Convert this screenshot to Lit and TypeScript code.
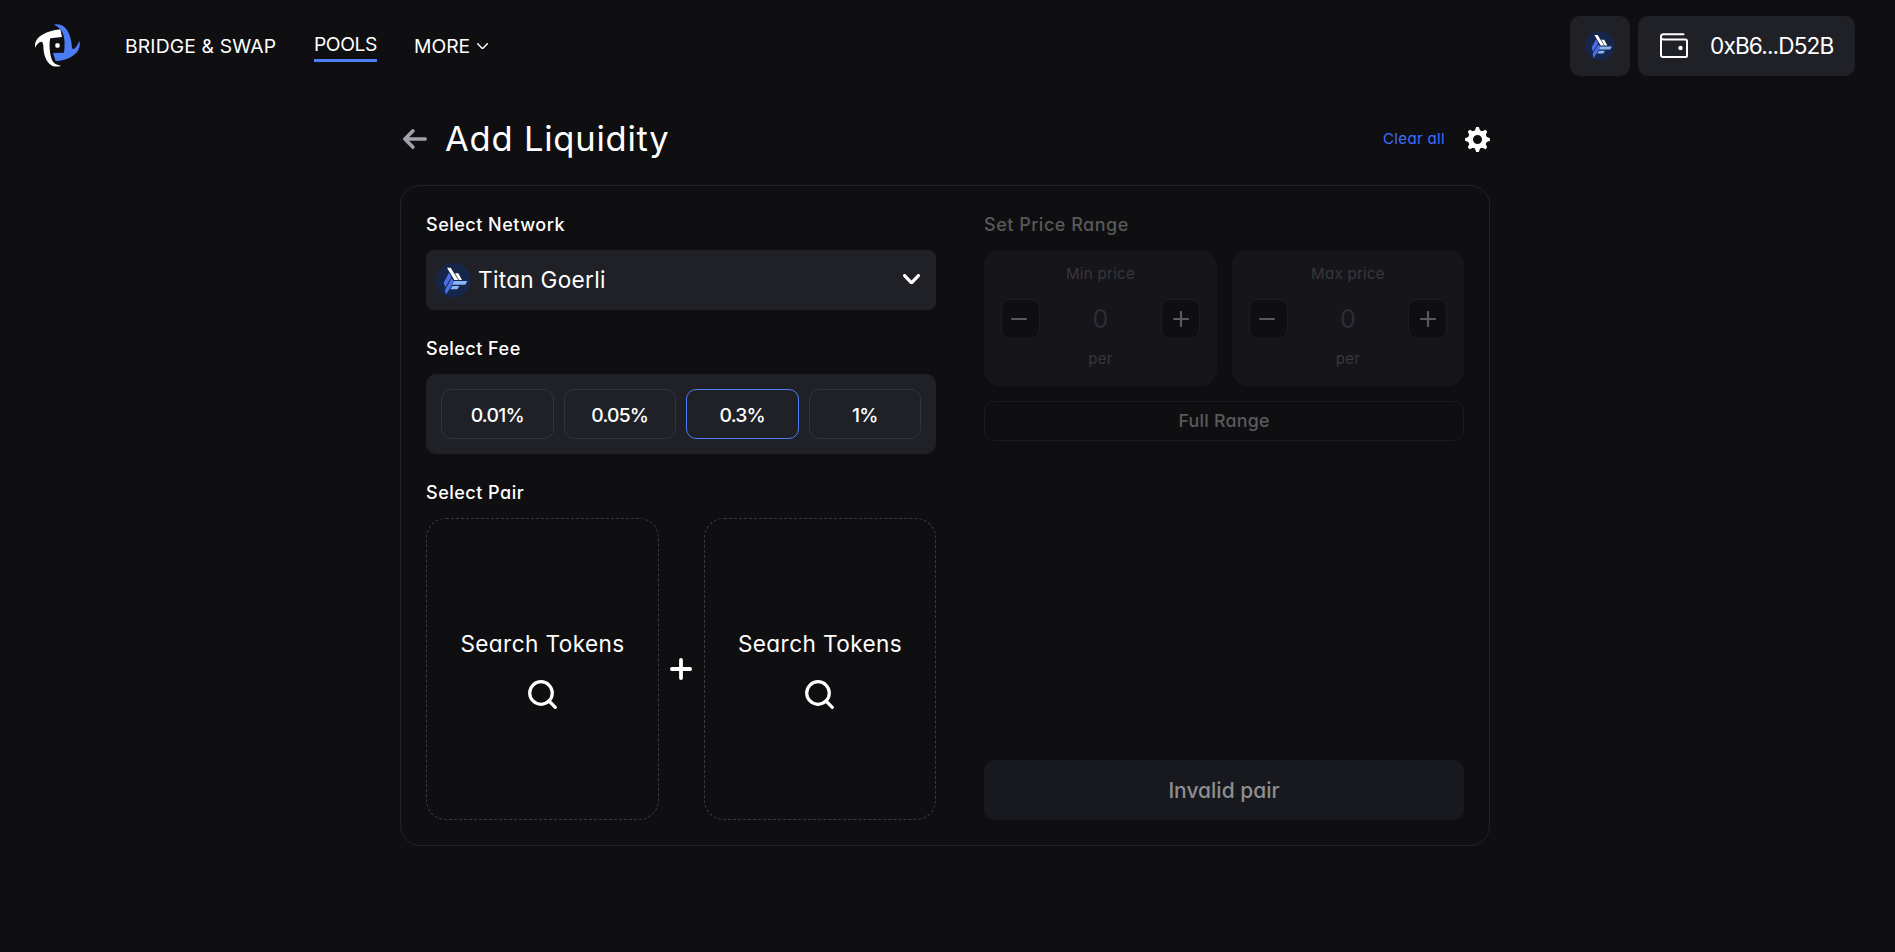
import { LitElement, html, css } from "lit";
import { customElement, state } from "lit/decorators.js";
import { classMap } from "lit/directives/class-map.js";

const logo = html`<svg class="logo" width="45" height="43" viewBox="45 42 135 129">
  <path fill="#fff" d="M45 113C43 88 62 66 121 58L126 81 91 85C87 98 88 128 95 148 100 161 111 166 124 167 98 177 76 160 71 122 70 106 70 98 65 95 56 96 50 103 45 113Z" />
  <path fill="#4c7cf5" d="M102 44C132 37 152 62 156 112 157 124 170 114 178 92 186 122 160 148 107 154L99 129 132 128C136 92 136 58 102 44Z" />
  <rect x="106" y="100" width="13" height="13" rx="4" fill="#fff" />
</svg>`;

const titan = html`<svg width="100%" height="100%" viewBox="0 0 105 105" preserveAspectRatio="none">
  <circle cx="52" cy="52" r="52" fill="#16264a" />
  <path fill="#4a6fe6" d="M39 29 46 42 28 73 23 59ZM47 46 54 56 30 95 27 80Z" />
  <path fill="#fff" d="M33 14H44L67 51H55ZM57 31H67L78 51H69Z" />
  <path fill="#8ab4f8" d="M54 54H94L88 65H49ZM49 69H70L64 79H43Z" />
</svg>`;

const chevron = (w: number, h: number, s: number) => html`<svg width=${w} height=${h} viewBox="0 0 ${w} ${h}" fill="none" stroke="#fff" stroke-width=${s} stroke-linecap="round" stroke-linejoin="round"><path d="M${s / 2} ${s / 2}L${w / 2} ${h - s / 2} ${w - s / 2} ${s / 2}" /></svg>`;

const wallet = html`<svg width="28" height="25" viewBox="0 0 28 25" fill="none" stroke="#fff" stroke-width="2" stroke-linejoin="round" stroke-linecap="round">
  <path d="M23.500 1.200H3.500A2.300 2.300 0 0 0 3.500 6.500H25.500A1.500 1.500 0 0 1 27 8V22.500A1.500 1.500 0 0 1 25.500 24H3A2 2 0 0 1 1 22V3.800" />
  <circle cx="20.500" cy="15" r="2.200" fill="#fff" stroke="none" />
</svg>`;

const back = html`<svg width="24" height="20" viewBox="0 0 24 20" fill="none" stroke="#a1a1ab" stroke-width="3.600" stroke-linecap="round" stroke-linejoin="round"><path d="M22.200 10H2M9.800 1.900 1.900 10 9.800 18.100" /></svg>`;

const teeth = [0, 45, 90, 135, 180, 225, 270, 315];
const gear = html`<svg width="25" height="25" viewBox="-12.500 -12.500 25 25">
  <circle r="7" fill="none" stroke="#fff" stroke-width="5" />
  <path fill="#fff" d=${teeth.map((a) => {
    const p = (r: number, d: number) => {
      const t = ((a + d) * Math.PI) / 180;
      return `${(r * Math.cos(t)).toFixed(2)} ${(r * Math.sin(t)).toFixed(2)}`;
    };
    return `M${p(8.6, -20)}L${p(12.5, -6)} ${p(12.5, 6)} ${p(8.6, 20)}Z`;
  }).join("")} />
</svg>`;

const search = html`<svg class="lens" width="29" height="29" viewBox="0 0 29 29" fill="none" stroke="#fff" stroke-width="3.200" stroke-linecap="round"><circle cx="13" cy="13" r="11.300" /><path d="M21 21 27.300 27.300" /></svg>`;

const plus = html`<svg width="22" height="22" viewBox="0 0 22 22" fill="none" stroke="#fff" stroke-width="3.800" stroke-linecap="round"><path d="M11 1.900V20.100M1.900 11H20.100" /></svg>`;

@customElement("app-root")
export class AppRoot extends LitElement {
  @state() private fee = "0.3%";

  static styles = css`
    :host { display: block; min-height: 952px; background: #0f0f11; color: #fff;
      font-family: "Inter", sans-serif; font-feature-settings: "cv11"; }
    * { box-sizing: border-box; }
    svg { display: block; flex: none; }
    button { font: inherit; font-feature-settings: inherit; letter-spacing: inherit; color: inherit; background: none; border: 0; padding: 0; margin: 0; }
    span, h1, h2 { white-space: nowrap; margin: 0; }
    h1 { font-weight: 400; }
    header { display: flex; align-items: center; height: 92px; padding: 0 40px 0 35px; }
    .logo { margin-bottom: 2px; }
    nav { display: flex; align-items: center; margin-left: 45px; gap: 37px; font-size: 19.300px; line-height: 30px; }
    .swap { letter-spacing: 0.15px; width: 152px; }
    .active { width: 63px; letter-spacing: -0.45px; border-bottom: 3px solid #4f7df6; line-height: 30px; margin-bottom: 1px; }
    .more { display: flex; align-items: center; gap: 7px; }
    .account { display: flex; gap: 8px; margin-left: auto; }
    .chip { width: 60px; height: 60px; border-radius: 10px; background: #202127; display: grid; place-items: center; }
    .chip .coin { width: 30px; height: 30px; }
    .wallet { width: 217px; height: 60px; border-radius: 10px; background: #202127; display: flex; align-items: center; padding: 0 0 2px 22px; gap: 22px; font-size: 22.600px; letter-spacing: -0.85px; }
    main { width: 1090px; margin: 20px 0 0 400px; }
    .titlebar { display: flex; align-items: center; height: 54px; padding-left: 3px; margin-bottom: 19px; }
    h1 { font-size: 34.500px; margin-left: 18px; line-height: 54px; letter-spacing: 0.78px; }
    .clear { margin: 0 20px 2px auto; color: #3d70ff; font-size: 15px; letter-spacing: 0.35px; }
    .panel { height: 661px; border: 1px solid #222329; border-radius: 20px; padding: 25px; display: grid; grid-template-columns: 510px 480px; justify-content: space-between; }
    .col { display: flex; flex-direction: column; min-width: 0; }
    h2 { font-size: 18px; font-weight: 450; line-height: 27px; margin-bottom: 12px; letter-spacing: 0.5px; }
    .select { display: flex; align-items: center; height: 60px; border-radius: 8px; background: #202127; padding: 0 16px 2px 10px; font-size: 22.600px; letter-spacing: 0.3px; margin-bottom: 25px; }
    .select .coin { width: 35px; height: 35px; margin: 2px 7px 0 0; }
    .select > svg { margin-left: auto; }
    .fees { display: grid; grid-template-columns: repeat(4, 1fr); gap: 10px; padding: 15px; height: 80px; border-radius: 10px; background: #202127; margin-bottom: 25px; }
    .fee { border: 1px solid #32323e; border-radius: 10px; font-size: 19.300px; font-weight: 450; letter-spacing: -0.75px; padding-top: 1px; }
    .fee.on { border-color: #4f7df6; }
    .pair { display: grid; grid-template-columns: 233px 1fr 232px; flex: 1; }
    .pair > svg { place-self: center; margin-right: 1px; }
    .token { border: 1px dashed #3a3a45; border-radius: 20px; display: flex; flex-direction: column; align-items: center; justify-content: center; gap: 18px; font-size: 22.600px; line-height: 36px; letter-spacing: 0.4px; padding-bottom: 3px; }
    .lens { margin-right: 1px; }
    .dim { color: #585859; }
    .ranges { display: grid; grid-template-columns: 233px 232px; justify-content: space-between; margin-bottom: 15px; }
    .range { height: 136px; border-radius: 16px; background: #16151a; padding: 12px 17px 0; display: flex; flex-direction: column; align-items: center; font-size: 15px; line-height: 24px; letter-spacing: 0.3px; color: #38383b; }
    .stepper { align-self: stretch; display: flex; align-items: center; justify-content: space-between; margin: 13px 0 8px; font-size: 25px; letter-spacing: 0; color: #2a2e39; }
    .step { width: 39px; height: 40px; border: 1px solid #1c1c23; border-radius: 10px; background: #0f0f13; display: grid; place-items: center; }
    .step.minus { padding-right: 3px; }
    .full { height: 40px; border: 1px solid #1b1b1f; border-radius: 10px; font-size: 17.800px; font-weight: 450; letter-spacing: 0.25px; color: #5a5a5c; padding-bottom: 1px; }
    .submit { margin-top: auto; height: 60px; border-radius: 10px; background: #18191e; color: #8e8e90; font-size: 21px; font-weight: 500; letter-spacing: 0; }
  `;

  private range(label: string) {
    return html`<div class="range">
      <span>${label}</span>
      <div class="stepper">
        <button class="step minus"><svg width="16" height="16" viewBox="0 0 16 16" stroke="#5a5a5c" stroke-width="2" stroke-linecap="round"><path d="M1 8H15" /></svg></button>
        <span>0</span>
        <button class="step"><svg width="16" height="16" viewBox="0 0 16 16" stroke="#5a5a5c" stroke-width="2.200" stroke-linecap="round"><path d="M1 8H15M8 1V15" /></svg></button>
      </div>
      <span>per</span>
    </div>`;
  }

  render() {
    return html`
      <header>
        ${logo}
        <nav>
          <span class="swap">BRIDGE &amp; SWAP</span>
          <span class="active">POOLS</span>
          <span class="more"><span>MORE</span>${chevron(11, 6.5, 1.4)}</span>
        </nav>
        <div class="account">
          <button class="chip"><div class="coin">${titan}</div></button>
          <button class="wallet">${wallet}<span>0xB6...D52B</span></button>
        </div>
      </header>
      <main>
        <div class="titlebar">${back}<h1>Add Liquidity</h1><span class="clear">Clear all</span>${gear}</div>
        <section class="panel">
          <div class="col">
            <h2>Select Network</h2>
            <div class="select"><div class="coin">${titan}</div><span>Titan Goerli</span>${chevron(17, 10.5, 3.2)}</div>
            <h2>Select Fee</h2>
            <div class="fees">${["0.01%", "0.05%", "0.3%", "1%"].map((f) => html`
              <button class=${classMap({ fee: true, on: f === this.fee })} @click=${() => (this.fee = f)}>${f}</button>`)}
            </div>
            <h2>Select Pair</h2>
            <div class="pair">
              <button class="token"><span>Search Tokens</span>${search}</button>
              ${plus}
              <button class="token"><span>Search Tokens</span>${search}</button>
            </div>
          </div>
          <div class="col">
            <h2 class="dim">Set Price Range</h2>
            <div class="ranges">${this.range("Min price")}${this.range("Max price")}</div>
            <button class="full">Full Range</button>
            <button class="submit">Invalid pair</button>
          </div>
        </section>
      </main>`;
  }
}
